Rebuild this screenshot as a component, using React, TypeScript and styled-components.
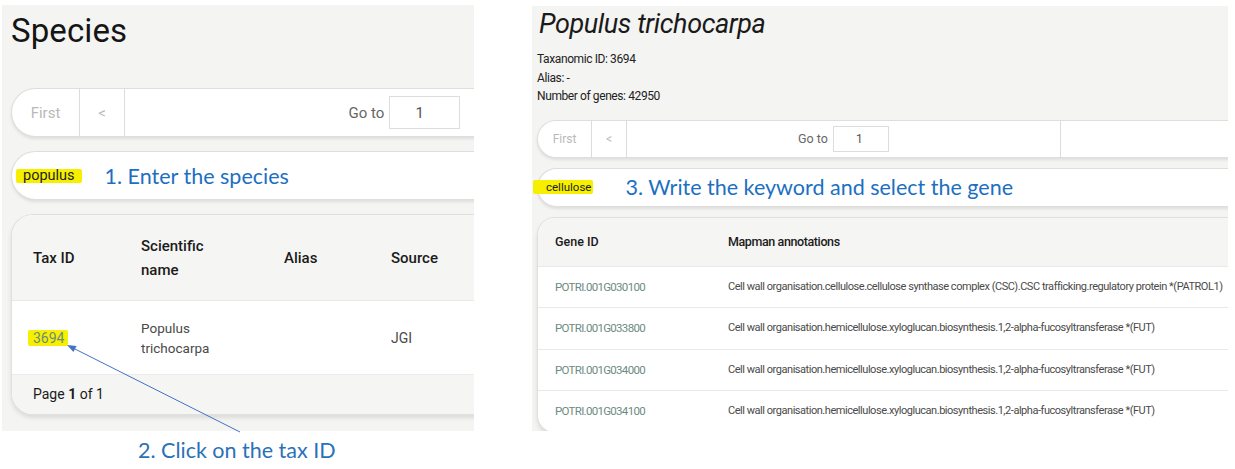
import React from "react";
import styled, { createGlobalStyle } from "styled-components";

const Global = createGlobalStyle`
  html, body { margin: 0; padding: 0; background: #ffffff; }
  body { font-family: Roboto, "Liberation Sans", Arial, sans-serif; color: #1a1a1a; }
`;

const Canvas = styled.div`
  position: relative;
  width: 1235px;
  height: 469px;
  overflow: hidden;
  display: flex;
  align-items: flex-start;
  background: #ffffff;
`;

const LeftColumn = styled.div`
  margin: 5px 0 0 2px;
  width: 472px;
  display: flex;
  flex-direction: column;
`;

const Panel = styled.section<{ $w: number; $h: number; $pl: number; $ml?: number; $mt?: number }>`
  width: ${(p) => p.$w}px;
  height: ${(p) => p.$h}px;
  margin-left: ${(p) => p.$ml ?? 0}px;
  margin-top: ${(p) => p.$mt ?? 0}px;
  padding-left: ${(p) => p.$pl}px;
  box-sizing: border-box;
  background: #f4f4f2;
  overflow: hidden;
  display: flex;
  flex-direction: column;
  align-items: flex-start;
  flex-shrink: 0;
  font-family: Roboto, "Liberation Sans", sans-serif;
`;

const Heading = styled.h1`
  margin: 6px 0 0;
  font-size: 33px;
  line-height: 40px;
  font-weight: 400;
  color: #151515;
  letter-spacing: 0.1px;
`;

const SpeciesTitle = styled.h2`
  margin: 2px 0 0 2px;
  font-size: 27px;
  line-height: 32px;
  font-weight: 400;
  font-style: italic;
  letter-spacing: -0.4px;
  color: #1a1a1a;
`;

const InfoList = styled.div`
  margin-top: 10px;
  font-size: 12px;
  line-height: 18.5px;
  letter-spacing: -0.4px;
  color: #222;
`;

const Card = styled.div<{ $h: number; $r: number; $mt: number }>`
  width: 900px;
  height: ${(p) => p.$h}px;
  margin-top: ${(p) => p.$mt}px;
  flex-shrink: 0;
  box-sizing: border-box;
  background: #ffffff;
  border: 1px solid #dedede;
  border-right: none;
  border-radius: ${(p) => p.$r}px 0 0 ${(p) => p.$r}px;
  box-shadow: 0 2px 3px rgba(0, 0, 0, 0.09);
  display: flex;
  align-items: stretch;
`;

const PagerCell = styled.div<{ $w: number; $fs: number; $muted?: boolean }>`
  width: ${(p) => p.$w}px;
  flex-shrink: 0;
  box-sizing: border-box;
  border-right: 1px solid #dcdcdc;
  display: flex;
  align-items: center;
  justify-content: center;
  font-size: ${(p) => p.$fs}px;
  color: ${(p) => (p.$muted ? "#b9b9b9" : "#666")};
`;

const GoLabel = styled.span<{ $fs: number }>`
  font-size: ${(p) => p.$fs}px;
  color: #666;
`;

const GoBox = styled.div<{ $w: number; $h: number; $pl: number; $fs: number }>`
  width: ${(p) => p.$w}px;
  height: ${(p) => p.$h}px;
  box-sizing: border-box;
  margin-left: 5px;
  border: 1px solid #dddddd;
  background: #fff;
  padding-left: ${(p) => p.$pl}px;
  display: flex;
  align-items: center;
  font-size: ${(p) => p.$fs}px;
  color: #555;
`;

const SearchRow = styled.div<{ $pl: number; $fs: number }>`
  display: flex;
  align-items: center;
  padding-left: ${(p) => p.$pl}px;
  font-size: ${(p) => p.$fs}px;
  color: #1e1e1e;
`;

const Marker = styled.span<{ $pl: number; $pr: number }>`
  background: #f6f000;
  padding: 0 ${(p) => p.$pr}px 0 ${(p) => p.$pl}px;
  margin-left: -${(p) => p.$pl}px;
  line-height: 14px;
  border-radius: 2px;
`;

const Note = styled.span<{ $ml: number }>`
  margin-left: ${(p) => p.$ml}px;
  font-family: Lato, "Open Sans", sans-serif;
  font-size: 21.5px;
  color: #1c6fc1;
`;

const Caption = styled.div`
  margin-top: 7px;
  padding-left: 136px;
  font-family: Lato, "Open Sans", sans-serif;
  font-size: 21.5px;
  line-height: 24px;
  color: #2a71b8;
`;

const TableCard = styled.div<{ $r: number; $mt: number }>`
  width: 900px;
  margin-top: ${(p) => p.$mt}px;
  flex-shrink: 0;
  box-sizing: border-box;
  border: 1px solid #e0e0e0;
  border-right: none;
  border-radius: ${(p) => p.$r}px 0 0 ${(p) => p.$r}px;
  box-shadow: 0 3px 4px rgba(0, 0, 0, 0.1);
  overflow: hidden;
  background: #fff;
`;

const Row = styled.div<{ $cols: string; $h: number; $head?: boolean; $line?: boolean }>`
  display: grid;
  grid-template-columns: ${(p) => p.$cols};
  height: ${(p) => p.$h}px;
  align-items: center;
  background: ${(p) => (p.$head ? "#f5f5f3" : "#ffffff")};
  border-top: ${(p) => (p.$line ? "1px solid #e9e9e9" : "none")};
  box-sizing: border-box;
`;

const Cell = styled.div<{ $pl: number; $fs: number; $tone: "head" | "body" | "link"; $lh?: number; $ls?: number }>`
  padding-left: ${(p) => p.$pl}px;
  font-size: ${(p) => p.$fs}px;
  line-height: ${(p) => p.$lh ?? 20}px;
  letter-spacing: ${(p) => p.$ls ?? 0}px;
  font-weight: ${(p) => (p.$tone === "head" ? 500 : 400)};
  color: ${(p) => (p.$tone === "head" ? "#1b1b1b" : p.$tone === "link" ? "#6d8b7f" : "#4a4a4a")};
  white-space: nowrap;
`;

const Footer = styled.div`
  height: 40px;
  background: #f5f5f3;
  display: flex;
  align-items: center;
  padding-left: 21px;
  padding-bottom: 2px;
  font-size: 14px;
  color: #1b1b1b;
  border-top: 1px solid #ececec;
  box-sizing: border-box;
`;

const Overlay = styled.svg`
  position: absolute;
  left: 0;
  top: 0;
  pointer-events: none;
`;

const genes = [
  ["POTRI.001G030100", "Cell wall organisation.cellulose.cellulose synthase complex (CSC).CSC trafficking.regulatory protein *(PATROL1)"],
  ["POTRI.001G033800", "Cell wall organisation.hemicellulose.xyloglucan.biosynthesis.1,2-alpha-fucosyltransferase *(FUT)"],
  ["POTRI.001G034000", "Cell wall organisation.hemicellulose.xyloglucan.biosynthesis.1,2-alpha-fucosyltransferase *(FUT)"],
  ["POTRI.001G034100", "Cell wall organisation.hemicellulose.xyloglucan.biosynthesis.1,2-alpha-fucosyltransferase *(FUT)"],
];

const leftCols = "108px 143px 107px 1fr";
const rightCols = "190px 1fr";

export default function App() {
  return (
    <>
      <Global />
      <Canvas>
        <LeftColumn>
          <Panel $w={472} $h={426} $pl={9}>
            <Heading>Species</Heading>
            <Card $h={49} $r={25} $mt={37}>
              <PagerCell $w={68} $fs={15} $muted>First</PagerCell>
              <PagerCell $w={45} $fs={15} $muted>&lt;</PagerCell>
              <PagerCell $w={560} $fs={15}>
                <GoLabel $fs={15}>Go to</GoLabel>
                <GoBox $w={71} $h={33} $pl={25} $fs={15}>1</GoBox>
              </PagerCell>
            </Card>
            <Card $h={49} $r={25} $mt={14}>
              <SearchRow $pl={11} $fs={14.5}>
                <Marker $pl={7} $pr={7}>populus</Marker>
                <Note $ml={23}>1. Enter the species</Note>
              </SearchRow>
            </Card>
            <TableCard $r={22} $mt={14}>
              <Row $cols={leftCols} $h={85} $head>
                <Cell $pl={21} $fs={15} $tone="head">Tax ID</Cell>
                <Cell $pl={21} $fs={15} $tone="head" $lh={24}>
                  Scientific
                  <br />
                  name
                </Cell>
                <Cell $pl={21} $fs={15} $tone="head">Alias</Cell>
                <Cell $pl={21} $fs={15} $tone="head">Source</Cell>
              </Row>
              <Row $cols={leftCols} $h={74} $line>
                <Cell $pl={21} $fs={14} $tone="link">
                  <Marker $pl={5} $pr={4}>3694</Marker>
                </Cell>
                <Cell $pl={21} $fs={13.5} $tone="body">
                  Populus
                  <br />
                  trichocarpa
                </Cell>
                <Cell $pl={21} $fs={14} $tone="body"></Cell>
                <Cell $pl={21} $fs={14} $tone="body">JGI</Cell>
              </Row>
              <Footer>
                Page&nbsp;<b>1</b>&nbsp;of 1
              </Footer>
            </TableCard>
          </Panel>
          <Caption>2. Click on the tax ID</Caption>
        </LeftColumn>

        <Panel $w={696} $h={425} $pl={5} $ml={58} $mt={6}>
          <SpeciesTitle>Populus trichocarpa</SpeciesTitle>
          <InfoList>
            <div>Taxanomic ID: 3694</div>
            <div>Alias: -</div>
            <div>Number of genes: 42950</div>
          </InfoList>
          <Card $h={38} $r={19} $mt={14}>
            <PagerCell $w={54} $fs={12} $muted>First</PagerCell>
            <PagerCell $w={35} $fs={12} $muted>&lt;</PagerCell>
            <PagerCell $w={434} $fs={12}>
              <GoLabel $fs={12.5}>Go to</GoLabel>
              <GoBox $w={56} $h={26} $pl={22} $fs={12}>1</GoBox>
            </PagerCell>
          </Card>
          <Card $h={39} $r={20} $mt={10}>
            <SearchRow $pl={8} $fs={11.5}>
              <Marker $pl={13} $pr={2}>cellulose</Marker>
              <Note $ml={32}>3. Write the keyword and select the gene</Note>
            </SearchRow>
          </Card>
          <TableCard $r={18} $mt={10}>
            <Row $cols={rightCols} $h={48} $head>
              <Cell $pl={17} $fs={12.5} $tone="head">Gene ID</Cell>
              <Cell $pl={0} $fs={12.5} $tone="head" $ls={-0.4}>Mapman annotations</Cell>
            </Row>
            {genes.map(([id, text]) => (
              <Row key={id} $cols={rightCols} $h={41.5} $line>
                <Cell $pl={17} $fs={11.5} $tone="link" $ls={-0.7}>{id}</Cell>
                <Cell $pl={0} $fs={11} $tone="body" $ls={-0.46}>{text}</Cell>
              </Row>
            ))}
          </TableCard>
        </Panel>

        <Overlay width={1235} height={469} viewBox="0 0 1235 469">
          <line x1={240} y1={432} x2={73} y2={348} stroke="#4472c4" strokeWidth={1} />
          <polygon points="67,345 73.4,352.1 76.6,345.9" fill="#4472c4" />
        </Overlay>
      </Canvas>
    </>
  );
}
